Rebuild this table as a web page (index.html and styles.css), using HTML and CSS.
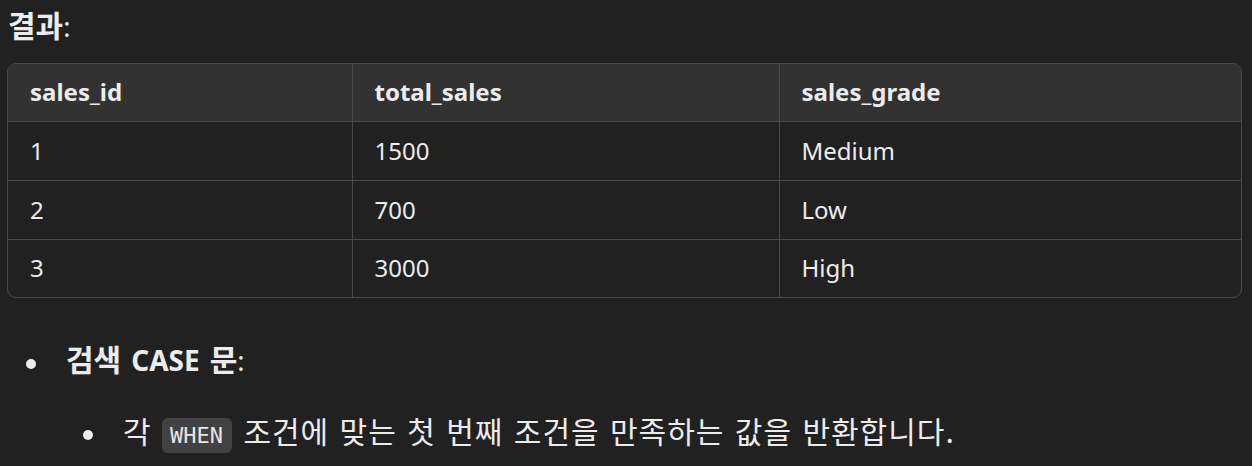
FILE: index.html
```html
<!DOCTYPE html>
<html lang="ko">
<head>
<meta charset="utf-8">
<link rel="stylesheet" href="styles.css">
</head>
<body>
<div class="page">
  <p class="label"><strong class="ko">결과</strong>:</p>
  <div class="table-wrap">
    <table class="result">
      <thead>
        <tr><th class="c1">sales_id</th><th class="c2">total_sales</th><th class="c3">sales_grade</th></tr>
      </thead>
      <tbody>
        <tr><td>1</td><td>1500</td><td>Medium</td></tr>
        <tr><td>2</td><td>700</td><td>Low</td></tr>
        <tr class="last"><td>3</td><td>3000</td><td>High</td></tr>
      </tbody>
    </table>
  </div>
  <ul class="list">
    <li class="item"><strong><span class="ko">검색</span> <span class="latin">CASE</span> <span class="ko">문</span></strong>:
      <ul class="sub">
        <li class="sub-item">각 <code>WHEN</code> 조건에 맞는 첫 번째 조건을 만족하는 값을 반환합니다.</li>
      </ul>
    </li>
  </ul>
</div>
</body>
</html>
```

FILE: styles.css
```css
html, body {
  margin: 0;
  padding: 0;
  background: #212121;
}
body {
  color: #ececec;
  font-family: "Noto Sans", "Noto Sans CJK KR", sans-serif;
  font-size: 24px;
  line-height: 36px;
}
.ko {
  font-family: "Noto Sans CJK KR", sans-serif;
  font-size: 30px;
}
.latin {
  font-family: "Noto Sans", sans-serif;
  font-size: 28px;
}
.page {
  padding: 6px 10px 0 8px;
}
.label {
  margin: 0 0 21px 0;
  height: 36px;
  font-size: 27px;
}
.label strong {
  font-weight: 700;
}
.table-wrap {
  margin-left: -1px;
  border: 1px solid #4a4a4a;
  border-radius: 9px;
  overflow: hidden;
  width: 1233px;
}
.result {
  width: 100%;
  border-collapse: collapse;
  table-layout: fixed;
}
.result th, .result td {
  box-sizing: border-box;
  text-align: left;
  padding: 11px 22px;
  height: 58px;
  border-left: 1px solid #4a4a4a;
  border-top: 1px solid #4a4a4a;
  font-weight: 400;
}
.result th {
  background: #323232;
  font-weight: 700;
  height: 57px;
  padding: 10px 22px 11px;
  border-top: none;
}
.result .last td {
  height: 57px;
  padding: 10px 22px 11px;
}
.result th:first-child, .result td:first-child {
  border-left: none;
}
.c1 { width: 344px; }
.c2 { width: 427px; }
.list {
  margin: 42px 0 0 0;
  padding-left: 58px;
  list-style: none;
}
.item {
  font-size: 27px;
}
.item strong {
  font-weight: 700;
  word-spacing: 3px;
}
.list li::before {
  content: "";
  display: inline-block;
  width: 10px;
  height: 10px;
  border-radius: 50%;
  background: #ececec;
  margin-left: -40px;
  margin-right: 30px;
  vertical-align: middle;
}
.sub {
  margin: 33px 0 0 0;
  padding-left: 57px;
  list-style: none;
}
.sub-item {
  font-family: "Noto Sans CJK KR", sans-serif;
  font-size: 30px;
  letter-spacing: 1px;
  word-spacing: 1px;
}
code {
  font-family: "DejaVu Sans Mono", "Liberation Mono", monospace;
  font-size: 22px;
  background: #424242;
  border-radius: 6px;
  padding: 5px 9px 5px 8px;
  margin: 0 1px 0 0;
  color: #e6e6e6;
  letter-spacing: 0;
  word-spacing: 0;
}
```
